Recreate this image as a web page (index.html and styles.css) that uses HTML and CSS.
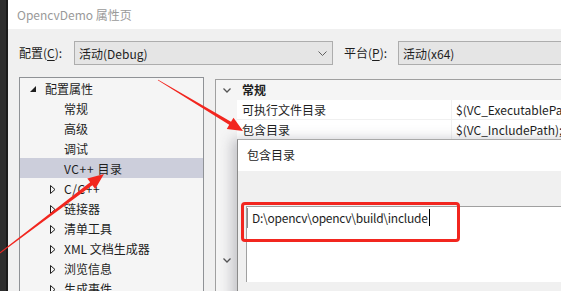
FILE: index.html
```html
<!DOCTYPE html>
<html lang="zh-CN">
<head>
  <meta charset="UTF-8">
  <title>OpencvDemo 属性页</title>
  <link rel="stylesheet" href="styles.css">
</head>
<body>
  <div class="page">
    <div class="edge"></div>
    <div class="window">
      <div class="titlebar">OpencvDemo 属性页</div>
      <div class="content">
        <div class="config-row">
          <span class="lbl">配置(<u>C</u>):</span>
          <div class="combo wide">
            <span>活动(Debug)</span>
            <svg class="chev" width="9" height="5" viewBox="0 0 9 5"><polyline points="0.5,0.5 4.5,4.5 8.5,0.5" fill="none" stroke="#606060" stroke-width="1"/></svg>
          </div>
          <span class="lbl second">平台(<u>P</u>):</span>
          <div class="combo">
            <span>活动(x64)</span>
          </div>
        </div>

        <div class="main">
          <div class="tree">
            <div class="node top">
              <span class="tog"><svg width="6" height="6" viewBox="0 0 6 6"><polygon points="6,0 6,6 0,6" fill="#1e1e1e"/></svg></span>
              <span>配置属性</span>
            </div>
            <div class="node sub"><span class="tog"></span><span>常规</span></div>
            <div class="node sub"><span class="tog"></span><span>高级</span></div>
            <div class="node sub"><span class="tog"></span><span>调试</span></div>
            <div class="node sub sel"><span class="tog"></span><span class="wide-txt">VC++ 目录</span></div>
            <div class="node sub"><span class="tog"><svg width="6" height="9" viewBox="0 0 6 9"><polygon points="0.5,0.5 5,4.5 0.5,8.5" fill="none" stroke="#1e1e1e" stroke-width="1"/></svg></span><span class="wide-txt">C/C++</span></div>
            <div class="node sub"><span class="tog"><svg width="6" height="9" viewBox="0 0 6 9"><polygon points="0.5,0.5 5,4.5 0.5,8.5" fill="none" stroke="#1e1e1e" stroke-width="1"/></svg></span><span>链接器</span></div>
            <div class="node sub"><span class="tog"><svg width="6" height="9" viewBox="0 0 6 9"><polygon points="0.5,0.5 5,4.5 0.5,8.5" fill="none" stroke="#1e1e1e" stroke-width="1"/></svg></span><span>清单工具</span></div>
            <div class="node sub"><span class="tog"><svg width="6" height="9" viewBox="0 0 6 9"><polygon points="0.5,0.5 5,4.5 0.5,8.5" fill="none" stroke="#1e1e1e" stroke-width="1"/></svg></span><span>XML 文档生成器</span></div>
            <div class="node sub"><span class="tog"><svg width="6" height="9" viewBox="0 0 6 9"><polygon points="0.5,0.5 5,4.5 0.5,8.5" fill="none" stroke="#1e1e1e" stroke-width="1"/></svg></span><span>浏览信息</span></div>
            <div class="node sub"><span class="tog"><svg width="6" height="9" viewBox="0 0 6 9"><polygon points="0.5,0.5 5,4.5 0.5,8.5" fill="none" stroke="#1e1e1e" stroke-width="1"/></svg></span><span>生成事件</span></div>
          </div>

          <div class="grid">
            <div class="grow head">
              <span class="gut"><svg width="8" height="5" viewBox="0 0 8 5"><polyline points="0.5,0.5 4,4 7.5,0.5" fill="none" stroke="#555" stroke-width="1.3"/></svg></span>
              <span class="hname">常规</span>
            </div>
            <div class="grow">
              <span class="gut"></span>
              <span class="name">可执行文件目录</span>
              <span class="val">$(VC_ExecutablePath_x64);$(WindowsSDK_ExecutablePath)</span>
            </div>
            <div class="grow">
              <span class="gut"></span>
              <span class="name">包含目录</span>
              <span class="val">$(VC_IncludePath);$(WindowsSDK_IncludePath);</span>
            </div>
            <div class="grow filler"><span class="gut"></span></div>
            <div class="grow head">
              <span class="gut"><svg width="8" height="5" viewBox="0 0 8 5"><polyline points="0.5,0.5 4,4 7.5,0.5" fill="none" stroke="#555" stroke-width="1.3"/></svg></span>
              <span class="hname">公共</span>
            </div>
          </div>
        </div>
      </div>
    </div>
  </div>

  <div class="dialog">
    <div class="dlg-title">包含目录</div>
    <div class="dlg-body">
      <div class="list">
        <div class="edit"><span class="caret">D:\opencv\opencv\build\include</span></div>
      </div>
      <div class="hscroll">
        <svg width="6" height="9" viewBox="0 0 6 9"><polyline points="5,0.5 1,4.5 5,8.5" fill="none" stroke="#c2c2c2" stroke-width="1.2"/></svg>
      </div>
    </div>
  </div>

  <div class="mark"></div>

  <svg class="arrows" width="561" height="291" viewBox="0 0 561 291">
    <polygon points="157.8,80.3 229.2,124.7 226.8,128.9 243,131 233.5,117.7 231,121.8 158.2,79.7" fill="#f2261f"/>
    <polygon points="-3.7,256.3 92.4,185.2 95.2,188.9 104,174 87.3,178.6 90.2,182.3 -4.3,255.7" fill="#f2261f"/>
  </svg>
</body>
</html>
```

FILE: styles.css
```css
* {
  margin: 0;
  padding: 0;
  box-sizing: border-box;
}

body {
  width: 561px;
  height: 291px;
  overflow: hidden;
  position: relative;
  background: #f0f0f0;
  color: #1e1e1e;
  font-family: "Noto Sans CJK SC", "Noto Sans", sans-serif;
  font-size: 12px;
}

.page {
  display: flex;
  height: 291px;
}

.edge {
  width: 8px;
  flex: none;
  background: linear-gradient(to right, #2e2e2e 6px, #1b1b1b 6px);
}

.window {
  flex: 1;
  min-width: 0;
  background: #f0f0f0;
}

.titlebar {
  height: 29px;
  line-height: 29px;
  padding-left: 9px;
  background: #fff;
  color: #9a9a9a;
  font-size: 12px;
}

.config-row {
  display: flex;
  align-items: center;
  padding: 12px 0 0 11px;
  white-space: nowrap;
}

.lbl {
  width: 55px;
  flex: none;
  line-height: 24px;
}

.lbl.second {
  margin-left: 11px;
  width: 54px;
}

.lbl u {
  text-decoration-thickness: 1px;
  text-underline-offset: 2px;
}

.combo {
  height: 24px;
  width: 200px;
  flex: none;
  display: flex;
  align-items: center;
  justify-content: space-between;
  padding: 0 5px 0 4px;
  background: #e5e5e5;
  border: 1px solid #adadad;
}

.combo.wide {
  width: 259px;
}

.main {
  display: flex;
  align-items: flex-start;
  margin-top: 12px;
}

.tree {
  width: 185px;
  height: 240px;
  flex: none;
  margin-left: 11px;
  background: #f5f5f5;
  border: 1px solid #8f9296;
}

.node {
  display: flex;
  align-items: center;
  height: 20px;
  white-space: nowrap;
}

.node.top {
  padding-left: 10px;
}

.node.top .tog {
  width: 15px;
  padding-top: 2px;
}

.node.sub {
  padding-left: 30px;
}

.node.sub .tog {
  width: 14px;
  padding-top: 2px;
}

.wide-txt {
  letter-spacing: 0.6px;
}

.tog {
  display: flex;
  align-items: center;
  flex: none;
}

.node.sel {
  background: #cccedb;
}

.grid {
  flex: 1;
  margin-left: 11px;
  margin-top: 2px;
  height: 240px;
  background: #f5f5f5;
  border-left: 1px solid #a0a0a0;
  border-top: 1px solid #a0a0a0;
}

.grow {
  display: flex;
  height: 20px;
  line-height: 19px;
  white-space: nowrap;
}

.gut {
  width: 21px;
  flex: none;
  display: flex;
  align-items: center;
  justify-content: center;
  padding-top: 1px;
}

.hname {
  padding-left: 5px;
  font-weight: bold;
}

.name {
  width: 214px;
  flex: none;
  padding-left: 5px;
  background: #fff;
  border-bottom: 1px solid #f0f0f0;
}

.val {
  flex: 1;
  overflow: hidden;
  padding-left: 4px;
  background: #fff;
  border-left: 1px solid #f0f0f0;
  border-bottom: 1px solid #f0f0f0;
}

.grow.filler {
  height: 110px;
}

.dialog {
  position: absolute;
  left: 237px;
  top: 139px;
  width: 360px;
  height: 170px;
  background: #f0f0f0;
  border-left: 1px solid #8a8a8a;
  border-top: 1px solid #a8a8a8;
  box-shadow: -5px 0 12px rgba(60, 60, 80, 0.28);
}

.dlg-title {
  height: 31px;
  line-height: 30px;
  padding-left: 9px;
  background: #fff;
}

.dlg-body {
  padding: 35px 0 0 8px;
}

.list {
  height: 76px;
  padding-top: 1px;
  background: #fff;
  border-left: 1px solid #a0a0a0;
  border-top: 1px solid #a0a0a0;
}

.edit {
  height: 20px;
  line-height: 20px;
  padding-left: 4px;
  border-left: 1px solid #8a8a8a;
  white-space: nowrap;
  letter-spacing: -0.25px;
}

.caret {
  padding-right: 1px;
  border-right: 1px solid #000;
}

.hscroll {
  height: 12px;
  padding: 4px 0 0 6px;
}

.mark {
  position: absolute;
  left: 241px;
  top: 202px;
  width: 219px;
  height: 40px;
  border: 3px solid #f2261f;
  border-radius: 4px;
}

.arrows {
  position: absolute;
  left: 0;
  top: 0;
  pointer-events: none;
}
```
